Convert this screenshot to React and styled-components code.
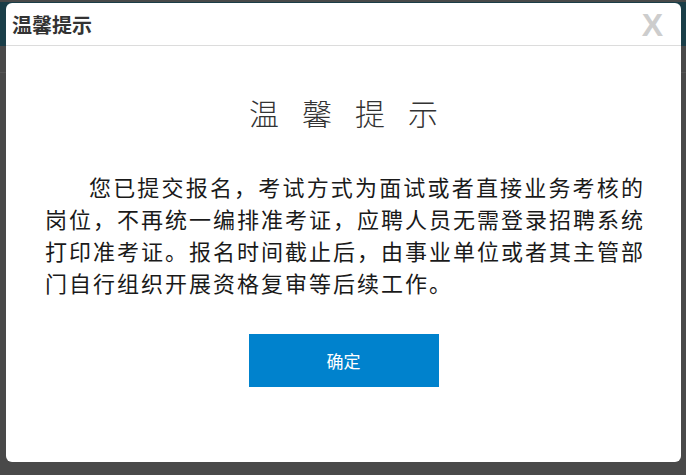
import React from 'react';
import styled, { createGlobalStyle } from 'styled-components';

const GlobalStyle = createGlobalStyle`
  html, body {
    margin: 0;
    padding: 0;
    width: 686px;
    height: 475px;
    overflow: hidden;
    background: #494949;
    font-family: "Noto Sans CJK SC", "Liberation Sans", sans-serif;
  }
`;

/* page behind the mask */
const Page = styled.div`
  position: relative;
  height: 475px;
  display: flex;
  flex-direction: column;
  background: #494949;
`;

const PageHeader = styled.div`
  margin-top: 2px;
  height: 44px;
  background: #1a3e48;
`;

const PageRule = styled.div`
  margin-top: 26px;
  height: 1px;
  background: #555;
`;

/* the dialog lies over the page */
const Dialog = styled.div`
  position: absolute;
  top: 3px;
  left: 6px;
  width: 675px;
  height: 459px;
  background: #fff;
  border-radius: 6px;
  display: flex;
  flex-direction: column;
  overflow: hidden;
`;

const DialogHead = styled.div`
  height: 43px;
  border-bottom: 1px solid #dcdcdc;
  display: flex;
  align-items: center;
  justify-content: space-between;
  padding: 0 18px 0 6px;
  box-sizing: border-box;
`;

const HeadTitle = styled.div`
  font-size: 20px;
  font-weight: 700;
  color: #333;
`;

const Close = styled.div`
  font-family: "Liberation Sans", Arial, sans-serif;
  font-size: 32px;
  font-weight: 700;
  color: #cdcdcd;
  line-height: 1;
  margin-top: 2px;
`;

const DialogBody = styled.div`
  padding: 44px 39px 0;
  display: flex;
  flex-direction: column;
  align-items: center;
`;

const BigTitle = styled.h2`
  margin: 0 -23px 36px 0;
  font-size: 30px;
  font-weight: 300;
  color: #333;
  letter-spacing: 23px;
  line-height: 44px;
`;

const Message = styled.p`
  margin: 0 -3px 0 0;
  align-self: stretch;
  font-size: 22px;
  letter-spacing: 2px;
  line-height: 32px;
  color: #1a1a1a;
  text-indent: 2em;
  text-align: justify;
`;

const Confirm = styled.button`
  margin-top: 36px;
  width: 190px;
  height: 53px;
  border: none;
  background: #0082cd;
  color: #fff;
  font-family: "Noto Sans CJK SC", sans-serif;
  font-size: 17px;
  cursor: pointer;
`;

export default function App() {
  return (
    <>
      <GlobalStyle />
      <Page>
        <PageHeader />
        <PageRule />
        <Dialog>
          <DialogHead>
            <HeadTitle>温馨提示</HeadTitle>
            <Close>X</Close>
          </DialogHead>
          <DialogBody>
            <BigTitle>温馨提示</BigTitle>
            <Message>
              您已提交报名，考试方式为面试或者直接业务考核的岗位，不再统一编排准考证，应聘人员无需登录招聘系统打印准考证。报名时间截止后，由事业单位或者其主管部门自行组织开展资格复审等后续工作。
            </Message>
            <Confirm>确定</Confirm>
          </DialogBody>
        </Dialog>
      </Page>
    </>
  );
}
